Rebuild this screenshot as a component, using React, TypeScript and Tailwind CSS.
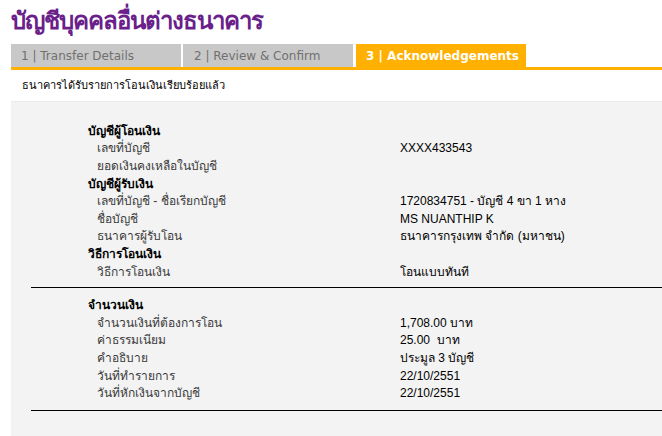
const sender = [
  { label: "เลขที่บัญชี", value: "XXXX433543" },
  { label: "ยอดเงินคงเหลือในบัญชี", value: "" },
];

const receiver = [
  { label: "เลขที่บัญชี - ชื่อเรียกบัญชี", value: "1720834751 - บัญชี 4 ขา 1 หาง" },
  { label: "ชื่อบัญชี", value: "MS NUANTHIP K" },
  { label: "ธนาคารผู้รับโอน", value: "ธนาคารกรุงเทพ จำกัด (มหาชน)" },
];

const method = [{ label: "วิธีการโอนเงิน", value: "โอนแบบทันที" }];

const amount = [
  { label: "จำนวนเงินที่ต้องการโอน", value: "1,708.00 บาท" },
  { label: "ค่าธรรมเนียม", value: "25.00  บาท" },
  { label: "คำอธิบาย", value: "ประมูล 3 บัญชี" },
  { label: "วันที่ทำรายการ", value: "22/10/2551" },
  { label: "วันที่หักเงินจากบัญชี", value: "22/10/2551" },
];

const Header = ({ text }: { text: string }) => (
  <div className="h-[17.6px] flex items-center pl-[88px] font-bold text-[12px] text-black">{text}</div>
);

const Row = ({ label, value }: { label: string; value: string }) => (
  <div className="h-[17.6px] flex items-center text-[12px]">
    <div className="w-[400px] pl-[97px] text-[#3a3a3a]">{label}</div>
    <div className="text-black whitespace-pre">{value}</div>
  </div>
);

const tabFont = { fontFamily: '"DejaVu Sans", sans-serif' };

export default function App() {
  return (
    <div className="w-[662px] h-[436px] bg-white overflow-hidden" style={{ fontFamily: '"Liberation Sans", "Noto Sans", sans-serif' }}>
      <div className="h-[44px] pl-[11px] pt-[3px] text-[24px] leading-[36px] font-semibold tracking-[-1px] text-[#6a1f8a]">บัญชีบุคคลอื่นต่างธนาคาร</div>

      <div className="ml-[11px] flex border-b-[3px] border-[#ffb000]">
        <div className="w-[170px] h-[23px] bg-[#c8c8c8] text-[#707070] text-[12px] flex items-center pl-[10px] whitespace-nowrap" style={tabFont}>1 | Transfer Details</div>
        <div className="w-[170px] h-[23px] bg-[#c8c8c8] text-[#707070] text-[12px] flex items-center pl-[11px] ml-[2px] whitespace-nowrap" style={tabFont}>2 | Review &amp; Confirm</div>
        <div className="w-[170px] h-[23px] bg-[#ffb000] text-white font-bold text-[12px] flex items-center pl-[10px] ml-[3px] whitespace-nowrap" style={tabFont}>3 | Acknowledgements</div>
      </div>

      <div className="h-[31px] pl-[22px] flex items-center text-[11px] text-black">ธนาคารได้รับรายการโอนเงินเรียบร้อยแล้ว</div>

      <div className="ml-[11px] h-[340px] bg-[#f3f3f3] border-t border-[#ececec] pt-[20px]">
        <div className="-ml-[11px]">
          <Header text="บัญชีผู้โอนเงิน" />
          {sender.map((r) => <Row key={r.label} {...r} />)}
          <Header text="บัญชีผู้รับเงิน" />
          {receiver.map((r) => <Row key={r.label} {...r} />)}
          <Header text="วิธีการโอนเงิน" />
          {method.map((r) => <Row key={r.label} {...r} />)}
        </div>
        <div className="ml-[20px] mt-[7px] border-t border-black" />
        <div className="-ml-[11px] pt-[8px] pb-[8px]">
          <Header text="จำนวนเงิน" />
          {amount.map((r) => <Row key={r.label} {...r} />)}
        </div>
        <div className="ml-[20px] border-t border-black" />
      </div>
    </div>
  );
}
